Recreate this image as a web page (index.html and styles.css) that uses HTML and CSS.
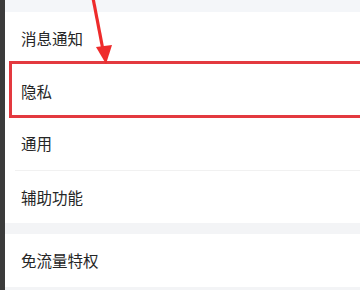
FILE: index.html
```html
<!DOCTYPE html>
<html lang="zh">
<head>
<meta charset="utf-8">
<link rel="stylesheet" href="styles.css">
</head>
<body>
<div class="screen">
  <div class="edge"></div>
  <div class="main">
    <div class="band top"></div>
    <div class="group">
      <div class="row">消息通知</div>
      <div class="row">隐私</div>
      <div class="row">通用</div>
      <div class="sep"></div>
      <div class="row">辅助功能</div>
    </div>
    <div class="band mid"></div>
    <div class="group">
      <div class="row">免流量特权</div>
    </div>
    <div class="band bottom"></div>
  </div>
  <div class="highlight"></div>
  <svg class="arrow" width="360" height="290" viewBox="0 0 360 290">
    <line x1="93" y1="-2" x2="103" y2="50" stroke="#ee2b2b" stroke-width="3.2"/>
    <polygon points="96,47 112,45 106,64" fill="#ee2b2b"/>
  </svg>
</div>
</body>
</html>
```

FILE: styles.css
```css
html, body {
  margin: 0;
  padding: 0;
  background: #ffffff;
}
.screen {
  position: relative;
  width: 360px;
  height: 290px;
  overflow: hidden;
  display: flex;
  font-family: "Noto Sans CJK SC", "Noto Sans", sans-serif;
}
.edge {
  width: 5px;
  flex: none;
  background: #3b3b3b;
}
.main {
  flex: 1;
  display: flex;
  flex-direction: column;
}
.band {
  background: #f4f6f9;
  flex: none;
}
.band.top { height: 12px; }
.band.mid { height: 11px; background: #f3f4f6; }
.band.bottom { height: 10px; background: #f3f4f6; }
.group {
  background: #ffffff;
  display: flex;
  flex-direction: column;
}
.row {
  height: 52.5px;
  flex: none;
  display: flex;
  align-items: center;
  padding-left: 16px;
  font-size: 15.5px;
  color: #262626;
}
.sep {
  height: 1px;
  flex: none;
  margin-left: 10px;
  background: #f1f1f1;
}
.highlight {
  position: absolute;
  left: 9px;
  top: 61px;
  width: 360px;
  height: 51px;
  border: 3px solid #e3393f;
}
.arrow {
  position: absolute;
  left: 0;
  top: 0;
}
```
